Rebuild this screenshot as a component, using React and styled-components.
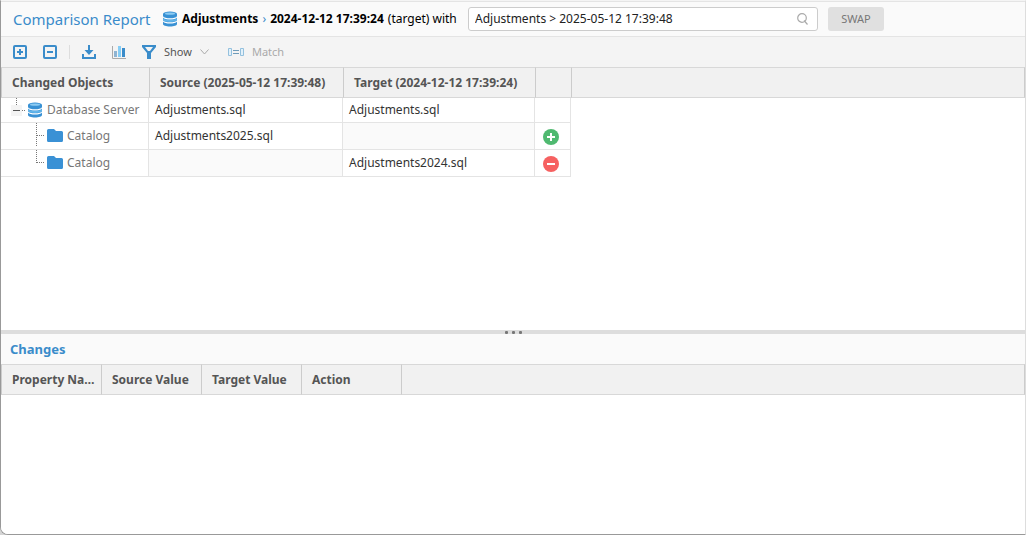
import React, { useState } from 'react';
import styled, { createGlobalStyle } from 'styled-components';

const objects = [
    { type: 'server', name: 'Database Server', source: 'Adjustments.sql', target: 'Adjustments.sql' },
    { type: 'catalog', name: 'Catalog', source: 'Adjustments2025.sql', target: '', change: 'added' },
    { type: 'catalog', name: 'Catalog', source: '', target: 'Adjustments2024.sql', change: 'removed', last: true },
];

const DatabaseIcon = () => (
    <svg width="16" height="16" viewBox="0 0 16 16" aria-hidden="true">
        <path d="M1 3v10c0 1.400 3 2.500 7 2.500s7-1.100 7-2.500V3z" fill="#3991d4" />
        <path d="M1 5.200c1 1.500 3.600 2 7 2s6-.5 7-2v1.300c-1 1.500-3.600 2-7 2s-6-.5-7-2z" fill="#fff" />
        <path d="M1 9.200c1 1.500 3.600 2 7 2s6-.5 7-2v1.300c-1 1.500-3.600 2-7 2s-6-.5-7-2z" fill="#fff" />
        <path d="M1 7c1 1.400 3.600 1.900 7 1.900s6-.5 7-1.900v1.800c-1 1.700-3.600 2.200-7 2.200s-6-.5-7-2.200z" fill="#62b5ea" />
        <ellipse cx="8" cy="3" rx="7" ry="2.500" fill="#3991d4" />
        <ellipse cx="8" cy="2.700" rx="5" ry="1.100" fill="#8ccbf2" />
    </svg>
);

const FolderIcon = () => (
    <svg width="16" height="14" viewBox="0 0 16 14" aria-hidden="true">
        <path d="M0 1.500Q0 0 1.500 0H7l2 2h5.500Q16 2 16 3.500v8q0 1.500-1.500 1.500h-13Q0 13 0 11.500z" fill="#3a91d5" />
    </svg>
);

const SquareIcon = ({ plus }) => (
    <svg width="14" height="14" viewBox="0 0 14 14" fill="none" stroke="#3a8cca" strokeWidth="2" aria-hidden="true">
        <rect x="1" y="1" width="12" height="12" rx="1" />
        <path d={plus ? 'M4 7h6M7 4v6' : 'M4 7h6'} />
    </svg>
);

const DownloadIcon = () => (
    <svg width="14" height="14" viewBox="0 0 14 14" fill="#3a8cca" aria-hidden="true">
        <path d="M6 0h2v5h3.500L7 10 2.500 5H6z" />
        <path d="M0 9h2v3h10V9h2v5H0z" />
    </svg>
);

const ChartIcon = () => (
    <svg width="14" height="14" viewBox="0 0 14 14" aria-hidden="true">
        <path d="M.5 1v12.500H14" fill="none" stroke="#aaa" />
        <path d="M2 6h3v6H2z" fill="#8fb4d2" />
        <path d="M6 1h3v11H6z" fill="#86cdf5" />
        <path d="M10 3h3v9h-3z" fill="#3a8cca" />
    </svg>
);

const FunnelIcon = () => (
    <svg width="14" height="14" viewBox="0 0 14 14" aria-hidden="true">
        <path d="M0 0h14v2L9 8v6H5V8L0 2z" fill="#3a8cca" />
        <path d="M3 2h8L8 6H6z" fill="#f4f4f4" />
    </svg>
);

const ChevronIcon = () => (
    <svg width="9" height="6" viewBox="0 0 9 6" fill="none" stroke="#aaa" aria-hidden="true">
        <path d="M.5 .5l4 4.500 4-4.500" />
    </svg>
);

const MatchIcon = () => (
    <svg width="16" height="8" viewBox="0 0 16 8" fill="#e3f1fa" stroke="#94c1de" aria-hidden="true">
        <path d="M.5 .5h3v7h-3zM12.500 .5h3v7h-3z" />
        <path d="M5 2.500h6M5 5.500h6" stroke="#6f9cba" />
    </svg>
);

const SearchIcon = () => (
    <svg width="12" height="12" viewBox="0 0 12 12" fill="none" stroke="#aaa" strokeWidth="1.200" aria-hidden="true">
        <circle cx="5" cy="5" r="4.300" />
        <path d="M7 7.500l3.500 4" />
    </svg>
);

const ChangeIcon = ({ change }) => (
    <svg width="16" height="16" viewBox="0 0 16 16" role="img" aria-label={change}>
        <circle cx="8" cy="8" r="8" fill={change === 'added' ? '#4fb970' : '#f66161'} />
        <path d={change === 'added' ? 'M4 8h8M8 4v8' : 'M4 8h8'} stroke="#fff" strokeWidth="2" />
    </svg>
);

const RootLines = () => (
    <svg width="26" height="24" viewBox="0 0 26 24" fill="none" aria-hidden="true">
        <path d="M15.500 0v8M21 12.500h4" stroke="#777" strokeDasharray="1 1" />
        <path d="M10 7h11v11H10z" fill="#f4f4f4" />
        <path d="M12 12.500h7" stroke="#555" />
    </svg>
);

const BranchLines = ({ last }) => (
    <svg width="46" height="26" viewBox="0 0 46 26" fill="none" stroke="#777" strokeDasharray="1 1" aria-hidden="true">
        <path d={last ? 'M35.500 0v13' : 'M35.500 0v24'} />
        <path d="M36 12.500h8" />
    </svg>
);

const App = () => {
    const [source, setSource] = useState('Adjustments > 2025-05-12 17:39:48');

    return (
        <Window>
            <GlobalStyle />
            <TitleBar>
                <Title>Comparison Report</Title>
                <Versions>
                    <DatabaseIcon />
                    <strong>Adjustments</strong>
                    <Arrow>›</Arrow>
                    <strong>2024-12-12 17:39:24</strong>
                    <span>(target) with</span>
                </Versions>
                <SearchBox>
                    <SearchInput
                        aria-label="Source version"
                        value={source}
                        onChange={e => setSource(e.target.value)}
                    />
                    <SearchIcon />
                </SearchBox>
                <SwapButton type="button">SWAP</SwapButton>
            </TitleBar>
            <Content>
                <Toolbar>
                    <ToolButton type="button" aria-label="Expand all"><SquareIcon plus /></ToolButton>
                    <ToolButton type="button" aria-label="Collapse all"><SquareIcon /></ToolButton>
                    <Separator />
                    <ToolButton type="button" aria-label="Export"><DownloadIcon /></ToolButton>
                    <ToolButton type="button" aria-label="Statistics"><ChartIcon /></ToolButton>
                    <ToolButton type="button" $menu><FunnelIcon /> Show <ChevronIcon /></ToolButton>
                    <ToolButton type="button" disabled><MatchIcon /> Match</ToolButton>
                </Toolbar>
                <ObjectsPane>
                    <Table>
                        <colgroup>
                            <Column $width={148} />
                            <Column $width={194} />
                            <Column $width={192} />
                            <Column $width={36} />
                            <col />
                        </colgroup>
                        <thead>
                            <tr>
                                <HeadCell>Changed Objects</HeadCell>
                                <HeadCell>Source (2025-05-12 17:39:48)</HeadCell>
                                <HeadCell>Target (2024-12-12 17:39:24)</HeadCell>
                                <HeadCell />
                                <HeadCell />
                            </tr>
                        </thead>
                        <tbody>
                            {objects.map((item, i) => (
                                <Row key={i} $root={item.type === 'server'}>
                                    <TreeCell>
                                        <TreeNode>
                                            {item.type === 'server' ? <RootLines /> : <BranchLines last={item.last} />}
                                            {item.type === 'server' ? <DatabaseIcon /> : <FolderIcon />}
                                            <span>{item.name}</span>
                                        </TreeNode>
                                    </TreeCell>
                                    <Cell $empty={!item.source}>{item.source}</Cell>
                                    <Cell $empty={!item.target}>{item.target}</Cell>
                                    <ChangeCell>{item.change && <ChangeIcon change={item.change} />}</ChangeCell>
                                    <td />
                                </Row>
                            ))}
                        </tbody>
                    </Table>
                </ObjectsPane>
                <Splitter><Dot /><Dot /><Dot /></Splitter>
                <ChangesPane>
                    <PaneTitle>Changes</PaneTitle>
                    <Table>
                        <colgroup>
                            <Column $width={100} />
                            <Column $width={100} />
                            <Column $width={100} />
                            <Column $width={100} />
                            <col />
                        </colgroup>
                        <thead>
                            <tr>
                                <HeadCell>Property Name</HeadCell>
                                <HeadCell>Source Value</HeadCell>
                                <HeadCell>Target Value</HeadCell>
                                <HeadCell>Action</HeadCell>
                                <HeadCell />
                            </tr>
                        </thead>
                    </Table>
                </ChangesPane>
                <EdgeHandle />
            </Content>
        </Window>
    );
}

const GlobalStyle = createGlobalStyle`
    * {
        box-sizing: border-box;
    }
    body {
        margin: 0;
        background: #d5d5d5;
        color: #333;
        font: 12px/16px "Noto Sans", sans-serif;
    }
    button, input {
        font: inherit;
    }
    svg {
        flex: none;
        display: block;
    }
`;

const Window = styled.div`
    display: flex;
    flex-direction: column;
    min-height: 100vh;
    overflow: hidden;
    background: #fff;
    border: 1px solid #999;
    border-top-color: #f4f4f4;
    border-right-color: #ddd;
    border-bottom-left-radius: 8px;
`;

const TitleBar = styled.header`
    display: flex;
    align-items: center;
    height: 36px;
    padding: 0 12px;
    background: #fafafa;
    border-top: 1px solid #e4e4e4;
    border-bottom: 1px solid #e4e4e4;
`;

const Title = styled.h1`
    flex: 0 0 149px;
    margin: 0;
    color: #3a8cca;
    font-size: 15px;
    line-height: 24px;
    font-weight: 400;
    white-space: nowrap;
`;

const Versions = styled.div`
    flex: 0 0 306px;
    display: flex;
    align-items: center;
    gap: 4px;
    color: #000;
    white-space: nowrap;
`;

const Arrow = styled.span`
    color: #3a8cca;
`;

const SearchBox = styled.label`
    flex: 0 1 350px;
    display: flex;
    align-items: center;
    height: 24px;
    padding: 0 8px 0 6px;
    background: #fff;
    border: 1px solid #ccc;
    border-radius: 3px;
`;

const SearchInput = styled.input`
    flex: 1;
    min-width: 0;
    padding: 0;
    border: 0;
    outline: 0;
    background: none;
    color: #222;
`;

const SwapButton = styled.button`
    flex: none;
    width: 56px;
    height: 24px;
    margin-left: 10px;
    padding: 0;
    border: 0;
    border-radius: 3px;
    background: #e0e0e0;
    color: #777;
    font-size: 11px;
`;

const Content = styled.main`
    position: relative;
    flex: 1;
    display: flex;
    flex-direction: column;
`;

const Toolbar = styled.div`
    display: flex;
    align-items: center;
    gap: 16px;
    height: 30px;
    padding: 0 12px;
    background: #f4f4f4;
`;

const ToolButton = styled.button`
    display: flex;
    align-items: center;
    gap: 8px;
    padding: 0 ${props => props.$menu ? 3 : 0}px 0 0;
    border: 0;
    background: none;
    color: #555;
    font-size: 11px;

    &:disabled {
        color: #aaa;
    }
`;

const Separator = styled.span`
    width: 1px;
    height: 14px;
    margin: 0 -4px;
    background: #ddd;
`;

const ObjectsPane = styled.section`
    flex: 1;
`;

const Table = styled.table`
    width: 100%;
    table-layout: fixed;
    border-collapse: separate;
    border-spacing: 0;
`;

const Column = styled.col`
    width: ${props => props.$width}px;
`;

const HeadCell = styled.th`
    height: 31px;
    padding: 0 4px 0 10px;
    overflow: hidden;
    background: #f1f1f1;
    border: solid #ccc;
    border-width: 1px 0 1px 1px;
    border-top-color: #d8d8d8;
    border-bottom-color: #d8d8d8;
    color: #555;
    text-align: left;
    text-overflow: ellipsis;
    white-space: nowrap;

    &:last-child {
        border-right-width: 1px;
    }
`;

const Row = styled.tr`
    height: ${props => props.$root ? 25 : 27}px;
`;

const Cell = styled.td`
    padding: 0 6px;
    border: solid #e4e4e4;
    border-width: 0 1px 1px 0;
    background: ${props => props.$empty ? '#fafafa' : '#fff'};
`;

const TreeCell = styled(Cell)`
    padding: 0;
    color: #777;
`;

const TreeNode = styled.div`
    display: flex;
    align-items: center;

    span {
        margin-left: 4px;
    }
`;

const ChangeCell = styled(Cell)`
    padding: 2px 8px 0;
`;

const Splitter = styled.div`
    display: flex;
    align-items: center;
    justify-content: center;
    gap: 4px;
    height: 4px;
    background: #ddd;
`;

const Dot = styled.span`
    width: 3px;
    height: 3px;
    border-radius: 1px;
    background: #777;
`;

const ChangesPane = styled.section`
    flex: 0 0 200px;
    background: #fff;
`;

const PaneTitle = styled.h2`
    margin: 0;
    padding: 5px 9px;
    background: #fafafa;
    color: #3a8cca;
    font-size: 13px;
    line-height: 20px;
`;

const EdgeHandle = styled.div`
    position: absolute;
    right: -1px;
    top: 50%;
    width: 1px;
    height: 48px;
    margin-top: -24px;
    background: linear-gradient(#999 40%, #444 40%, #444 60%, #999 60%);
`;

export default App;
